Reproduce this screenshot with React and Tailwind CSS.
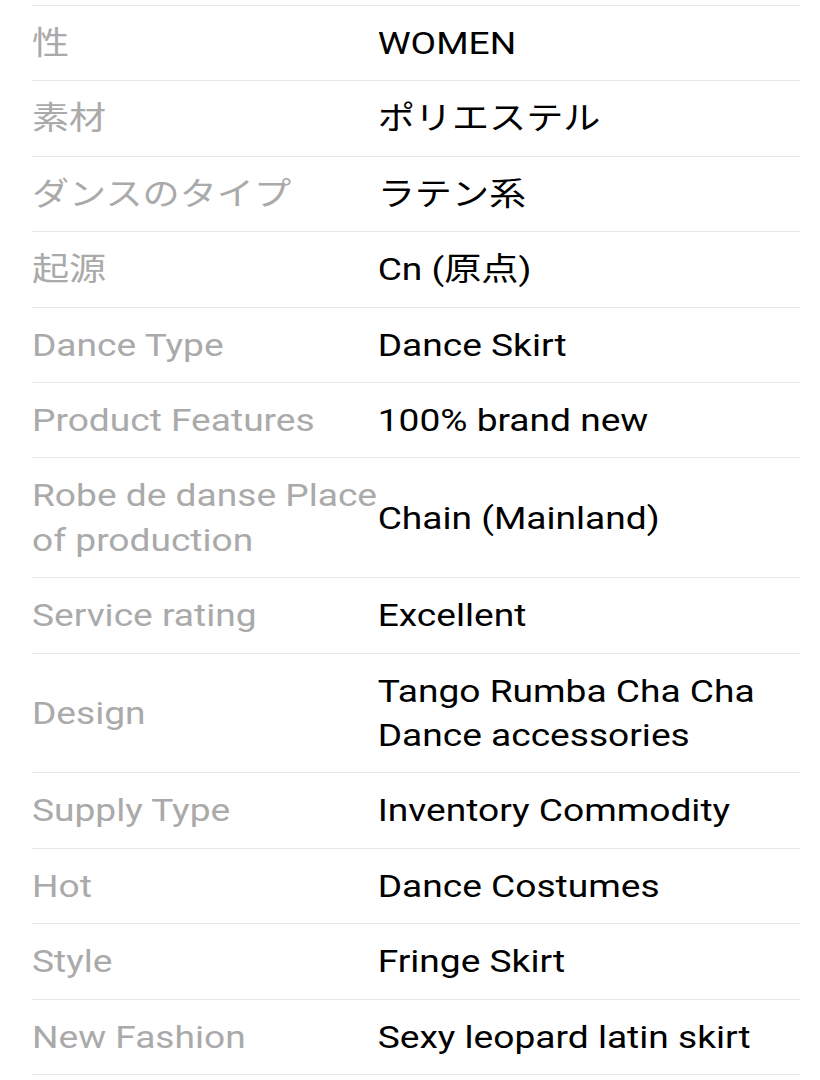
import React from 'react';

const specs = [
  ['性', 'WOMEN'],
  ['素材', 'ポリエステル'],
  ['ダンスのタイプ', 'ラテン系'],
  ['起源', 'Cn (原点)'],
  ['Dance Type', 'Dance Skirt'],
  ['Product Features', '100% brand new'],
  ['Robe de danse Place of production', 'Chain (Mainland)'],
  ['Service rating', 'Excellent'],
  ['Design', 'Tango Rumba Cha Cha Dance accessories'],
  ['Supply Type', 'Inventory Commodity'],
  ['Hot', 'Dance Costumes'],
  ['Style', 'Fringe Skirt'],
  ['New Fashion', 'Sexy leopard latin skirt'],
];

const App = () => {
  return (
    <div
      className="min-h-[1080px] overflow-hidden bg-white pl-[32px] pt-[5px]"
      style={{ fontFamily: 'Roboto, "Noto Sans CJK JP", sans-serif' }}
    >
      {/* the capture is stretched sideways, so the table is too */}
      <div className="w-[662px] origin-top-left scale-x-[1.16] border-b border-[#e8e8e8]">
        {specs.map(([label, value]) => (
          <div
            key={label}
            className="flex items-center border-t border-[#e8e8e8] py-[15px] text-[32px] leading-[44.4px]"
          >
            <div className="w-[298px] shrink-0 text-[#aaaaaa]">{label}</div>
            <div className="flex-1 text-black">{value}</div>
          </div>
        ))}
      </div>
    </div>
  );
};

export default App;
